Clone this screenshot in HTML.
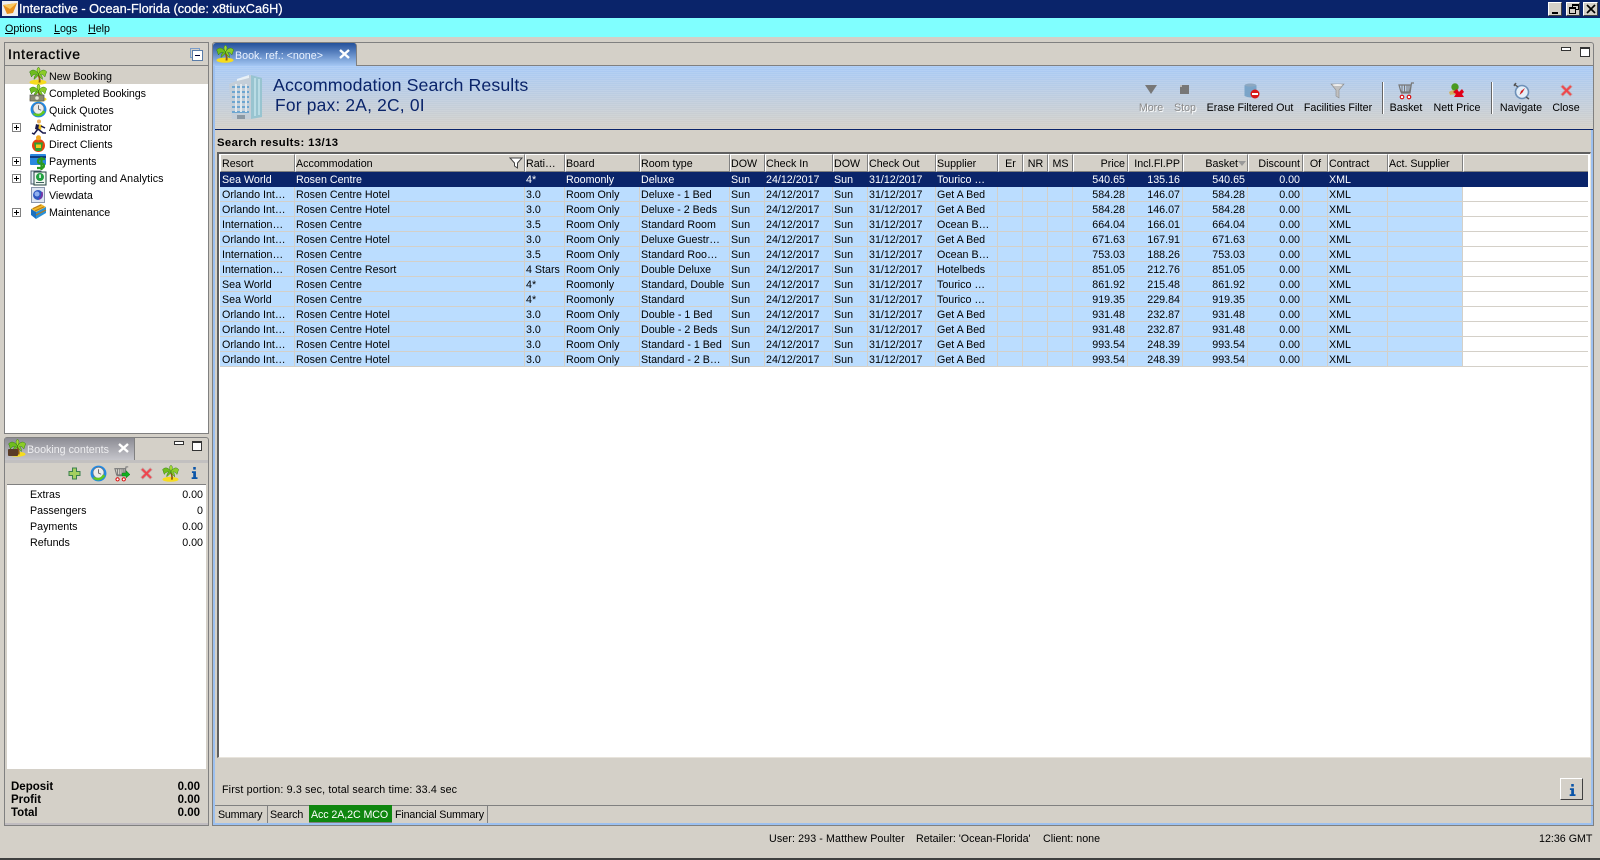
<!DOCTYPE html>
<html><head><meta charset="utf-8"><title>Interactive</title>
<style>
*{box-sizing:border-box}
html,body{margin:0;padding:0}
body{width:1600px;height:860px;overflow:hidden;position:relative;background:#d4d0c8;font:10.7px/14px "Liberation Sans",sans-serif;color:#000}
.a{position:absolute}
.t{position:absolute;white-space:nowrap;line-height:14px;margin-top:1px}
.h{margin-top:0}
.r{text-align:right}
svg{position:absolute;overflow:visible}
table{position:absolute;left:220px;top:154px;width:1368px;border-collapse:separate;border-spacing:0;table-layout:fixed;font:10.7px/14px "Liberation Sans",sans-serif}
th{height:18px;padding:2px 0 0 0;font-weight:normal;text-align:left;background:#d4d0c8;border-top:1px solid #fff;border-left:1px solid #fff;border-right:1px solid #808080;border-bottom:1px solid #808080;white-space:nowrap;overflow:hidden}
td{height:15px;padding:2px 0 0 1px;background:#bbddff;border-right:1px solid #d4d0c8;border-bottom:1px solid #d4d0c8;white-space:nowrap;overflow:hidden;line-height:12px;vertical-align:top}
td:first-child{padding-left:2px}
th:first-child{padding-left:1px}
td.n{text-align:right;padding:2px 2px 0 0}
th.n{text-align:right;padding:2px 2px 0 0}
th.c{text-align:center;padding:2px 0 0}
td.f{background:#fff;border-right:0}
tr.s td{background:#0a246a;color:#fff;border-right-color:#0a246a;border-bottom-color:#0a246a}
.tb{position:absolute;top:101px;white-space:nowrap;text-align:center;transform:translateX(-50%)}
.dis{color:#8a8a8a;text-shadow:1px 1px 0 #fff}
.btn{position:absolute;background:#d4d0c8;border-top:1px solid #fff;border-left:1px solid #fff;border-right:1px solid #404040;border-bottom:1px solid #404040}
.ex{position:absolute;left:12px;width:9px;height:9px;border:1px solid #808080;background:#fff}
.ex:before{content:"";position:absolute;left:1px;top:3px;width:5px;height:1px;background:#000}
.ex:after{content:"";position:absolute;left:3px;top:1px;width:1px;height:5px;background:#000}
</style></head><body>
<svg width="0" height="0" style="position:absolute">
<defs>
<symbol id="palm" viewBox="0 0 18 18"><ellipse cx="9" cy="15.200" rx="8.500" ry="2.600" fill="#f6dc1e"/><path d="M8 7.500Q10.500 11 9.500 15.500L11.500 15.500Q12 11 9.800 7.500Z" fill="#8b5a14"/><path d="M9.500 7C7 3 3.500 1.500 .5 5C1.500 6 1.500 8 2.500 10C3.500 8 5.500 7 7.500 7.500C5.500 8.500 5 10.500 5 12.500C7 10.500 9 9.500 9.500 7Z" fill="#6fbc1e" stroke="#2f7d10" stroke-width=".5"/><path d="M9.500 7C12 3 15 1.500 17.800 5C16.800 6 16.800 8 15.800 10C14.800 8 13 7 11.500 7.500C13 8.500 13.500 10.500 13.500 12.500C11.500 10.500 10 9.500 9.500 7Z" fill="#8ccc28" stroke="#2f7d10" stroke-width=".5"/><path d="M9.500 7C7.500 4 7.500 1.500 9.500 .2C11.500 1.500 11.500 4 9.500 7Z" fill="#a6d832" stroke="#2f7d10" stroke-width=".5"/></symbol>
<symbol id="clock" viewBox="0 0 18 18"><circle cx="9" cy="9" r="8.400" fill="#1f8ae6"/><circle cx="9" cy="8.200" r="5.800" fill="#ececec" stroke="#5f7288" stroke-width=".7"/><path d="M9 4.500V8.500L11.800 9.800" fill="none" stroke="#666" stroke-width="1"/><path d="M2.500 13.500Q9 20 16.500 11.500L13.500 10Q11 15 5.500 13Z" fill="#62c81e"/></symbol>
<symbol id="cart" viewBox="0 0 18 18"><path d="M1 3H13L12 10H3Z M16 1H13.500L12 11H3" fill="none" stroke="#777" stroke-width="1.200"/><path d="M4 3V10M6.500 3V10M9 3V10M11 3V10" stroke="#777" stroke-width="1"/><circle cx="4" cy="15" r="1.800" fill="#fff" stroke="#d80000" stroke-width="1.100"/><circle cx="11" cy="15" r="1.800" fill="#fff" stroke="#d80000" stroke-width="1.100"/></symbol>
<symbol id="x" viewBox="0 0 14 14"><path d="M3 1L7 5L11 1L13 3L9 7L13 11L11 13L7 9L3 13L1 11L5 7L1 3Z" fill="#f0444c" stroke="#c8a0a0" stroke-width=".8"/></symbol>
<symbol id="info" viewBox="0 0 8 14"><path d="M2.500 0h3v3h-3z M1 5h4.700v7H7.500v2H.7v-2h1.800V7H1z" fill="#0b55a8"/></symbol>
</defs></svg>

<!-- title bar -->
<div class="a" style="left:0;top:0;width:1600px;height:18px;background:#0a246a"></div>
<svg style="left:2px;top:1px" width="16" height="15" viewBox="0 0 16 15"><rect width="16" height="15" fill="#eee"/><path d="M1 4L15 2L11 12L5 13Z" fill="#e8901c"/><path d="M1 4L15 2L8 8Z" fill="#f8c860"/></svg>
<div class="t h" style="left:19px;top:2px;color:#fff;font-size:12.750px;-webkit-text-stroke:.25px #fff">Interactive - Ocean-Florida (code: x8tiuxCa6H)</div>
<div class="btn" style="left:1548px;top:2px;width:14px;height:14px"><div class="a" style="left:3px;top:9px;width:6px;height:2px;background:#000"></div></div>
<div class="btn" style="left:1566px;top:2px;width:14px;height:14px"><div class="a" style="left:5px;top:1px;width:7px;height:6px;border:1px solid #000;border-top-width:2px"></div><div class="a" style="left:2px;top:4px;width:7px;height:7px;border:1px solid #000;border-top-width:2px;background:#d4d0c8"></div></div>
<div class="btn" style="left:1583px;top:2px;width:15px;height:14px"><svg style="left:3px;top:2px" width="8" height="8"><path d="M0 0L8 8M8 0L0 8" fill="none" stroke="#000" stroke-width="1.700"/></svg></div>

<!-- menu -->
<div class="a" style="left:0;top:18px;width:1600px;height:19px;background:#80ffff"></div>
<div class="t" style="left:5px;top:21px"><u>O</u>ptions</div>
<div class="t" style="left:54px;top:21px"><u>L</u>ogs</div>
<div class="t" style="left:88px;top:21px"><u>H</u>elp</div>

<!-- left tree panel -->
<div class="a" style="left:4px;top:42px;width:205px;height:392px;background:#fff;border:1px solid #808080"></div>
<div class="a" style="left:5px;top:43px;width:203px;height:23px;background:#d4d0c8;border-bottom:1px solid #808080"></div>
<div class="t h" style="left:8px;top:46px;font:14px/16px 'Liberation Sans',sans-serif;-webkit-text-stroke:.3px #000;letter-spacing:.75px">Interactive</div>
<div class="a" style="left:190px;top:48px;width:10px;height:10px;border:1px solid #7a9cc8"></div>
<div class="a" style="left:192px;top:50px;width:11px;height:11px;border:1px solid #5a7ca8;background:#fff"><div class="a" style="left:2px;top:4px;width:5px;height:1px;background:#003"></div></div>
<div class="a" style="left:5px;top:66px;width:203px;height:18px;background:#d4d0c8"></div>

<svg style="left:29px;top:67px" width="18" height="18"><use href="#palm"/></svg>
<svg style="left:29px;top:84px" width="18" height="18"><use href="#palm"/><rect x="1" y="11" width="14" height="6" fill="#8a8a70" stroke="#555" stroke-width=".7"/><circle cx="8" cy="14" r="1.800" fill="#e8e8d8"/></svg>
<svg style="left:30px;top:101px" width="17" height="17"><use href="#clock"/></svg>
<svg style="left:31px;top:119px" width="16" height="16" viewBox="0 0 16 16"><circle cx="8" cy="2.500" r="2" fill="#e8b060"/><path d="M7 5L11 6L10 11L6 10Z" fill="#f0c020"/><path d="M5 5L8 6L7 11L4 10Z" fill="#1a1a4c"/><path d="M7 10L12 14L15 14M7 10L3 15L1 14M10 7L14 9" fill="none" stroke="#1a1a4c" stroke-width="1.500"/></svg>
<svg style="left:30px;top:135px" width="17" height="17" viewBox="0 0 17 17"><circle cx="8.500" cy="10.500" r="6.500" fill="#e84010"/><path d="M4 7.500H13L11.500 16H5.500Z" fill="#30a030"/><rect x="6" y="9.500" width="5" height="3.500" fill="#f4c820"/><circle cx="8.500" cy="2.800" r="2.500" fill="#f0a820"/></svg>
<svg style="left:30px;top:153px" width="17" height="17" viewBox="0 0 17 17"><rect x="0" y="1" width="16" height="11" rx="1" fill="#2a88e0"/><rect x="0" y="3" width="16" height="2" fill="#103c80"/><path d="M15 6H10Q8 6 8 8.500Q8 10.500 11 10.500Q14 10.500 14 12.500Q14 15 11.500 15H7M11.500 4V17" fill="none" stroke="#2a9a20" stroke-width="2.200"/></svg>
<svg style="left:31px;top:170px" width="16" height="16" viewBox="0 0 16 16"><rect x="0" y="1" width="10" height="13" fill="#e6eef8" stroke="#506070"/><rect x="3" y="2" width="12" height="13" fill="#f0f8f0" stroke="#204040"/><circle cx="9" cy="7" r="4" fill="#20a040"/><rect x="8.300" y="4.500" width="1.500" height="3.500" fill="#fff"/><rect x="5" y="12" width="8" height="1" fill="#406060"/></svg>
<svg style="left:31px;top:187px" width="15" height="16" viewBox="0 0 15 16"><rect x=".5" y=".5" width="13" height="15" fill="#dfe6f2" stroke="#8a96ac"/><circle cx="7" cy="8" r="5" fill="#3058c0"/><circle cx="6" cy="7" r="2.500" fill="#90b0f0"/><path d="M8 12Q12 10 11 5" fill="none" stroke="#8030a0" stroke-width="1.500"/></svg>
<svg style="left:30px;top:203px" width="17" height="17" viewBox="0 0 17 17"><path d="M1 6L11 1L16 4L6 9Z" fill="#f0b828"/><path d="M1 6L6 9V16L1 12Z" fill="#1a70c0"/><path d="M6 9L16 4V10L6 16Z" fill="#2a90d8"/><path d="M3 5.500L11 2M5 8L14 3.800M6 12L16 7" stroke="#b87818" fill="none"/></svg>

<div class="t" style="left:49px;top:69px">New Booking</div>
<div class="t" style="left:49px;top:86px;letter-spacing:-.1px">Completed Bookings</div>
<div class="t" style="left:49px;top:103px">Quick Quotes</div>
<div class="t" style="left:49px;top:120px">Administrator</div>
<div class="t" style="left:49px;top:137px">Direct Clients</div>
<div class="t" style="left:49px;top:154px">Payments</div>
<div class="t" style="left:49px;top:171px;letter-spacing:.1px">Reporting and Analytics</div>
<div class="t" style="left:49px;top:188px">Viewdata</div>
<div class="t" style="left:49px;top:205px">Maintenance</div>
<div class="ex" style="top:123px"></div>
<div class="ex" style="top:157px"></div>
<div class="ex" style="top:174px"></div>
<div class="ex" style="top:208px"></div>

<!-- lower left panel -->
<div class="a" style="left:4px;top:437px;width:205px;height:389px;background:#d4d0c8;border:1px solid #808080;border-radius:3px 3px 0 0"></div>
<div class="a" style="left:5px;top:438px;width:130px;height:22px;background:linear-gradient(#8c8c94,#c6c6cc);border-right:1px solid #808080"></div>
<div class="a" style="left:5px;top:460px;width:203px;height:3px;background:#c2c0c0"></div>
<svg style="left:8px;top:439px" width="18" height="18"><use href="#palm"/><rect x="0" y="10" width="10" height="7" rx="1" fill="#5a3c28"/></svg>
<div class="t" style="left:27px;top:442px;color:#eeeef0">Booking contents</div>
<svg style="left:119px;top:444px" width="9" height="8"><path d="M0 0L9 8M9 0L0 8" stroke="#fff" stroke-width="2.400"/></svg>
<div class="a" style="left:174px;top:441px;width:10px;height:4px;border:1px solid #333;background:#fff"></div>
<div class="a" style="left:192px;top:441px;width:10px;height:10px;border:1px solid #333;border-top-width:2px;background:#fff"></div>
<div class="a" style="left:7px;top:463px;width:199px;height:22px;background:#d4d0c8;border-bottom:1px solid #808080"></div>
<svg style="left:68px;top:467px" width="13" height="13"><path d="M4.500 1h4v3.500H12v4H8.500V12h-4V8.500H1v-4h3.500z" fill="#a4d060" stroke="#3c8050"/></svg>
<svg style="left:90px;top:465px" width="17" height="17"><use href="#clock"/></svg>
<svg style="left:114px;top:466px" width="16" height="16"><use href="#cart"/><path d="M8 7H12V4.500L16 8.500L12 12V10H8Z" fill="#10b020" stroke="#0a6a10" stroke-width=".4"/></svg>
<svg style="left:140px;top:467px" width="13" height="13"><use href="#x"/></svg>
<svg style="left:162px;top:465px" width="17" height="17"><use href="#palm"/></svg>
<svg style="left:191px;top:467px" width="7" height="12"><use href="#info"/></svg>
<div class="a" style="left:7px;top:485px;width:199px;height:284px;background:#fff"></div>
<div class="t" style="left:30px;top:487px">Extras</div><div class="t r" style="right:1397px;top:487px">0.00</div>
<div class="t" style="left:30px;top:503px">Passengers</div><div class="t r" style="right:1397px;top:503px">0</div>
<div class="t" style="left:30px;top:519px">Payments</div><div class="t r" style="right:1397px;top:519px">0.00</div>
<div class="t" style="left:30px;top:535px">Refunds</div><div class="t r" style="right:1397px;top:535px">0.00</div>
<div class="t" style="left:11px;top:779px;font-weight:bold;font-size:11.500px">Deposit</div><div class="t" style="right:1400px;top:779px;font-weight:bold;font-size:11.500px">0.00</div>
<div class="t" style="left:11px;top:792px;font-weight:bold;font-size:11.500px">Profit</div><div class="t" style="right:1400px;top:792px;font-weight:bold;font-size:11.500px">0.00</div>
<div class="t" style="left:11px;top:805px;font-weight:bold;font-size:11.500px">Total</div><div class="t" style="right:1400px;top:805px;font-weight:bold;font-size:11.500px">0.00</div>
<div class="a" style="left:5px;top:823px;width:203px;height:2px;background:#c0bcc0"></div>

<!-- main panel -->
<div class="a" style="left:212px;top:42px;width:1382px;height:784px;background:#d4d0c8;border:1px solid #808080;border-radius:3px 3px 0 0"></div>
<div class="a" style="left:213px;top:65px;width:2px;height:760px;background:#9cc0f0"></div>
<div class="a" style="left:1591px;top:65px;width:2px;height:760px;background:#9cc0f0"></div>
<div class="a" style="left:213px;top:823px;width:1380px;height:2px;background:#9cc0f0"></div>
<div class="a" style="left:213px;top:65px;width:1380px;height:1px;background:#808080"></div>
<div class="a" style="left:213px;top:43px;width:144px;height:23px;background:linear-gradient(#23509a,#a4c7f4);border-radius:3px 3px 0 0;border-right:1px solid #808080"></div>
<svg style="left:216px;top:45px" width="18" height="18"><use href="#palm"/></svg>
<div class="t" style="left:235px;top:48px;color:#eaf2ff">Book. ref.: &lt;none&gt;</div>
<svg style="left:340px;top:50px" width="9" height="8"><path d="M0 0L9 8M9 0L0 8" stroke="#fff" stroke-width="2.400"/></svg>
<div class="a" style="left:1561px;top:47px;width:10px;height:4px;border:1px solid #333;background:#fff"></div>
<div class="a" style="left:1580px;top:47px;width:10px;height:10px;border:1px solid #333;border-top-width:2px;background:#fff"></div>

<!-- results header -->
<div class="a" style="left:215px;top:66px;width:1378px;height:63px;background:repeating-linear-gradient(rgba(255,255,255,.10) 0 1px,rgba(0,0,0,0) 1px 2px),linear-gradient(#a8caf6,#d4d0c8)"></div>
<div class="a" style="left:215px;top:129px;width:1378px;height:1px;background:#0a246a"></div>
<svg style="left:227px;top:73px" width="36" height="48" viewBox="0 0 36 48"><path d="M2 11L24 2V46L5 46Z" fill="#c4ced8"/><path d="M24 2L35 5V44L24 46Z" fill="#98c4d0"/><path d="M10 6L22 2V5L10 8Z" fill="#e8f0f6"/><g fill="#6ea6d0"><path d="M5 13h17v2H5zM5 18h17v2H5zM5 23h17v2H5zM5 28h17v2H5zM5 33h17v2H5zM5 38h17v2H5z"/></g><g fill="#e0e8ee"><path d="M8 11h2v28H8zM13 11h2v28h-2zM18 11h2v28h-2z"/></g><path d="M28 5v38M32 6v36" stroke="#c4e4ec" stroke-width="1.500"/><rect x="10" y="42" width="8" height="4" fill="#8a98a4"/></svg>
<div class="t h" style="left:273px;top:75px;font-size:17.750px;line-height:20px;color:#0a246a;letter-spacing:.1px">Accommodation Search Results</div>
<div class="t h" style="left:275px;top:95px;font-size:17.400px;line-height:20px;color:#0a246a;letter-spacing:.2px">For pax: 2A, 2C, 0I</div>

<svg style="left:1145px;top:84px" width="12" height="11"><path d="M0 1H12L6 10Z" fill="#777"/></svg>
<svg style="left:1180px;top:85px" width="9" height="9"><rect width="9" height="9" fill="#777"/><rect x="0" y="0" width="2" height="2" fill="#bbb"/></svg>
<svg style="left:1244px;top:83px" width="16" height="16" viewBox="0 0 16 16"><ellipse cx="6.500" cy="2.500" rx="6" ry="2" fill="#8ea8c0"/><path d="M.5 2.500V13Q6.500 16 12.500 13V2.500Q6.500 5 .5 2.500Z" fill="#7aa4c8"/><circle cx="11" cy="11" r="4.500" fill="#d81818"/><rect x="8" y="10" width="6" height="2" fill="#fff"/></svg>
<svg style="left:1331px;top:83px" width="13" height="16" viewBox="0 0 13 16"><path d="M0 1H13L8 7V15L5 13V7Z" fill="#c0c0c0" stroke="#8c8c8c" stroke-width=".6"/><ellipse cx="6.500" cy="2" rx="5" ry="1" fill="#eee"/></svg>
<svg style="left:1398px;top:82px" width="18" height="18"><use href="#cart"/></svg>
<svg style="left:1449px;top:83px" width="16" height="16" viewBox="0 0 16 16"><circle cx="6" cy="4" r="3.700" fill="#4a9a20"/><path d="M0 9Q4 6 7 8L7 12Q3 11 1 12Z" fill="#d2b060"/><path d="M4 9L8 6L10 9L13 6L15 9L13 11L15 14H5L7 11Z" fill="#e00018"/></svg>
<svg style="left:1513px;top:83px" width="17" height="17" viewBox="0 0 17 17"><circle cx="9" cy="9" r="6.500" fill="#e4eef8" stroke="#6d90b8" stroke-width="1.600"/><path d="M12 5L9.500 9.500L6.500 12L8 8Z" fill="#d02020"/><path d="M1 1L5 4M3 0L1 3" stroke="#555" stroke-width="1.400"/><path d="M13 14l3 2" stroke="#555" stroke-width="1.400"/></svg>
<svg style="left:1560px;top:84px" width="13" height="13"><use href="#x"/></svg>

<div class="tb dis" style="left:1151px">More</div>
<div class="tb dis" style="left:1185px">Stop</div>
<div class="tb" style="left:1250px">Erase Filtered Out</div>
<div class="tb" style="left:1338px">Facilities Filter</div>
<div class="tb" style="left:1406px">Basket</div>
<div class="tb" style="left:1457px">Nett Price</div>
<div class="tb" style="left:1521px">Navigate</div>
<div class="tb" style="left:1566px">Close</div>
<div class="a" style="left:1382px;top:82px;width:1px;height:32px;background:#666;box-shadow:1px 0 0 #fff"></div>
<div class="a" style="left:1491px;top:82px;width:1px;height:32px;background:#666;box-shadow:1px 0 0 #fff"></div>

<div class="t" style="left:217px;top:135px;font-size:11.300px;font-weight:bold;letter-spacing:.4px">Search results: 13/13</div>

<!-- grid -->
<div class="a" style="left:217px;top:152px;width:1374px;height:606px;background:#fff;border-top:2px solid #606060;border-left:2px solid #606060;border-right:1px solid #e8e4dc;border-bottom:1px solid #e8e4dc"></div>
<table>
<colgroup><col style="width:75px"><col style="width:230px"><col style="width:40px"><col style="width:75px"><col style="width:90px"><col style="width:35px"><col style="width:68px"><col style="width:35px"><col style="width:68px"><col style="width:62px"><col style="width:25px"><col style="width:25px"><col style="width:25px"><col style="width:55px"><col style="width:55px"><col style="width:65px"><col style="width:55px"><col style="width:25px"><col style="width:60px"><col style="width:75px"><col style="width:125px"></colgroup>
<thead><tr><th>Resort</th><th style="position:relative">Accommodation<svg style="right:1px;top:2px" width="14" height="12"><path d="M1 1H13L8.500 6V11L5.500 9V6Z" fill="#fff" stroke="#444"/></svg></th><th>Rati…</th><th>Board</th><th>Room type</th><th>DOW</th><th>Check In</th><th>DOW</th><th>Check Out</th><th>Supplier</th><th class="c">Er</th><th class="c">NR</th><th class="c">MS</th><th class="n">Price</th><th class="n">Incl.Fl.PP</th><th class="n" style="padding-right:9px;position:relative">Basket<svg style="right:1px;top:6px" width="8" height="5"><path d="M0 0H8L4 5Z" fill="#999"/></svg></th><th class="n">Discount</th><th class="c">Of</th><th>Contract</th><th>Act. Supplier</th><th style="border-right:0"></th></tr></thead>
<tbody>
<tr class="s"><td>Sea World</td><td>Rosen Centre</td><td>4*</td><td>Roomonly</td><td>Deluxe</td><td>Sun</td><td>24/12/2017</td><td>Sun</td><td>31/12/2017</td><td>Tourico …</td><td></td><td></td><td></td><td class="n">540.65</td><td class="n">135.16</td><td class="n">540.65</td><td class="n">0.00</td><td></td><td>XML</td><td></td><td style="background:#0a246a"></td></tr>
<tr><td>Orlando Int…</td><td>Rosen Centre Hotel</td><td>3.0</td><td>Room Only</td><td>Deluxe - 1 Bed</td><td>Sun</td><td>24/12/2017</td><td>Sun</td><td>31/12/2017</td><td>Get A Bed</td><td></td><td></td><td></td><td class="n">584.28</td><td class="n">146.07</td><td class="n">584.28</td><td class="n">0.00</td><td></td><td>XML</td><td></td><td class="f"></td></tr>
<tr><td>Orlando Int…</td><td>Rosen Centre Hotel</td><td>3.0</td><td>Room Only</td><td>Deluxe - 2 Beds</td><td>Sun</td><td>24/12/2017</td><td>Sun</td><td>31/12/2017</td><td>Get A Bed</td><td></td><td></td><td></td><td class="n">584.28</td><td class="n">146.07</td><td class="n">584.28</td><td class="n">0.00</td><td></td><td>XML</td><td></td><td class="f"></td></tr>
<tr><td>Internation…</td><td>Rosen Centre</td><td>3.5</td><td>Room Only</td><td>Standard Room</td><td>Sun</td><td>24/12/2017</td><td>Sun</td><td>31/12/2017</td><td>Ocean B…</td><td></td><td></td><td></td><td class="n">664.04</td><td class="n">166.01</td><td class="n">664.04</td><td class="n">0.00</td><td></td><td>XML</td><td></td><td class="f"></td></tr>
<tr><td>Orlando Int…</td><td>Rosen Centre Hotel</td><td>3.0</td><td>Room Only</td><td>Deluxe Guestr…</td><td>Sun</td><td>24/12/2017</td><td>Sun</td><td>31/12/2017</td><td>Get A Bed</td><td></td><td></td><td></td><td class="n">671.63</td><td class="n">167.91</td><td class="n">671.63</td><td class="n">0.00</td><td></td><td>XML</td><td></td><td class="f"></td></tr>
<tr><td>Internation…</td><td>Rosen Centre</td><td>3.5</td><td>Room Only</td><td>Standard Roo…</td><td>Sun</td><td>24/12/2017</td><td>Sun</td><td>31/12/2017</td><td>Ocean B…</td><td></td><td></td><td></td><td class="n">753.03</td><td class="n">188.26</td><td class="n">753.03</td><td class="n">0.00</td><td></td><td>XML</td><td></td><td class="f"></td></tr>
<tr><td>Internation…</td><td>Rosen Centre Resort</td><td>4 Stars</td><td>Room Only</td><td>Double Deluxe</td><td>Sun</td><td>24/12/2017</td><td>Sun</td><td>31/12/2017</td><td>Hotelbeds</td><td></td><td></td><td></td><td class="n">851.05</td><td class="n">212.76</td><td class="n">851.05</td><td class="n">0.00</td><td></td><td>XML</td><td></td><td class="f"></td></tr>
<tr><td>Sea World</td><td>Rosen Centre</td><td>4*</td><td>Roomonly</td><td>Standard, Double</td><td>Sun</td><td>24/12/2017</td><td>Sun</td><td>31/12/2017</td><td>Tourico …</td><td></td><td></td><td></td><td class="n">861.92</td><td class="n">215.48</td><td class="n">861.92</td><td class="n">0.00</td><td></td><td>XML</td><td></td><td class="f"></td></tr>
<tr><td>Sea World</td><td>Rosen Centre</td><td>4*</td><td>Roomonly</td><td>Standard</td><td>Sun</td><td>24/12/2017</td><td>Sun</td><td>31/12/2017</td><td>Tourico …</td><td></td><td></td><td></td><td class="n">919.35</td><td class="n">229.84</td><td class="n">919.35</td><td class="n">0.00</td><td></td><td>XML</td><td></td><td class="f"></td></tr>
<tr><td>Orlando Int…</td><td>Rosen Centre Hotel</td><td>3.0</td><td>Room Only</td><td>Double - 1 Bed</td><td>Sun</td><td>24/12/2017</td><td>Sun</td><td>31/12/2017</td><td>Get A Bed</td><td></td><td></td><td></td><td class="n">931.48</td><td class="n">232.87</td><td class="n">931.48</td><td class="n">0.00</td><td></td><td>XML</td><td></td><td class="f"></td></tr>
<tr><td>Orlando Int…</td><td>Rosen Centre Hotel</td><td>3.0</td><td>Room Only</td><td>Double - 2 Beds</td><td>Sun</td><td>24/12/2017</td><td>Sun</td><td>31/12/2017</td><td>Get A Bed</td><td></td><td></td><td></td><td class="n">931.48</td><td class="n">232.87</td><td class="n">931.48</td><td class="n">0.00</td><td></td><td>XML</td><td></td><td class="f"></td></tr>
<tr><td>Orlando Int…</td><td>Rosen Centre Hotel</td><td>3.0</td><td>Room Only</td><td>Standard - 1 Bed</td><td>Sun</td><td>24/12/2017</td><td>Sun</td><td>31/12/2017</td><td>Get A Bed</td><td></td><td></td><td></td><td class="n">993.54</td><td class="n">248.39</td><td class="n">993.54</td><td class="n">0.00</td><td></td><td>XML</td><td></td><td class="f"></td></tr>
<tr><td>Orlando Int…</td><td>Rosen Centre Hotel</td><td>3.0</td><td>Room Only</td><td>Standard - 2 B…</td><td>Sun</td><td>24/12/2017</td><td>Sun</td><td>31/12/2017</td><td>Get A Bed</td><td></td><td></td><td></td><td class="n">993.54</td><td class="n">248.39</td><td class="n">993.54</td><td class="n">0.00</td><td></td><td>XML</td><td></td><td class="f"></td></tr>
</tbody></table>

<!-- footer of main -->
<div class="t" style="left:222px;top:782px;letter-spacing:.15px">First portion: 9.3 sec, total search time: 33.4 sec</div>
<div class="btn" style="left:1560px;top:778px;width:23px;height:22px"><svg style="left:8px;top:5px" width="7" height="12"><use href="#info"/></svg></div>
<div class="a" style="left:215px;top:805px;width:1378px;height:1px;background:#808080"></div>
<div class="a" style="left:309px;top:805px;width:83px;height:18px;background:#0f860f;border-bottom:1px solid #808080"></div>
<div class="a" style="left:267px;top:806px;width:1px;height:17px;background:#808080"></div>
<div class="a" style="left:487px;top:806px;width:1px;height:17px;background:#808080"></div>
<div class="t" style="left:218px;top:807px;letter-spacing:-.2px">Summary</div>
<div class="t" style="left:270px;top:807px;letter-spacing:-.1px">Search</div>
<div class="t" style="left:311px;top:807px;color:#fff;letter-spacing:-.1px">Acc 2A,2C MCO</div>
<div class="t" style="left:395px;top:807px;letter-spacing:-.15px">Financial Summary</div>

<!-- status -->
<div class="t" style="left:769px;top:831px;letter-spacing:.1px">User: 293 - Matthew Poulter</div>
<div class="t" style="left:916px;top:831px">Retailer: 'Ocean-Florida'</div>
<div class="t" style="left:1043px;top:831px">Client: none</div>
<div class="t" style="left:1539px;top:831px">12:36 GMT</div>
<div class="a" style="left:0;top:858px;width:1600px;height:2px;background:#404040"></div>
</body></html>
